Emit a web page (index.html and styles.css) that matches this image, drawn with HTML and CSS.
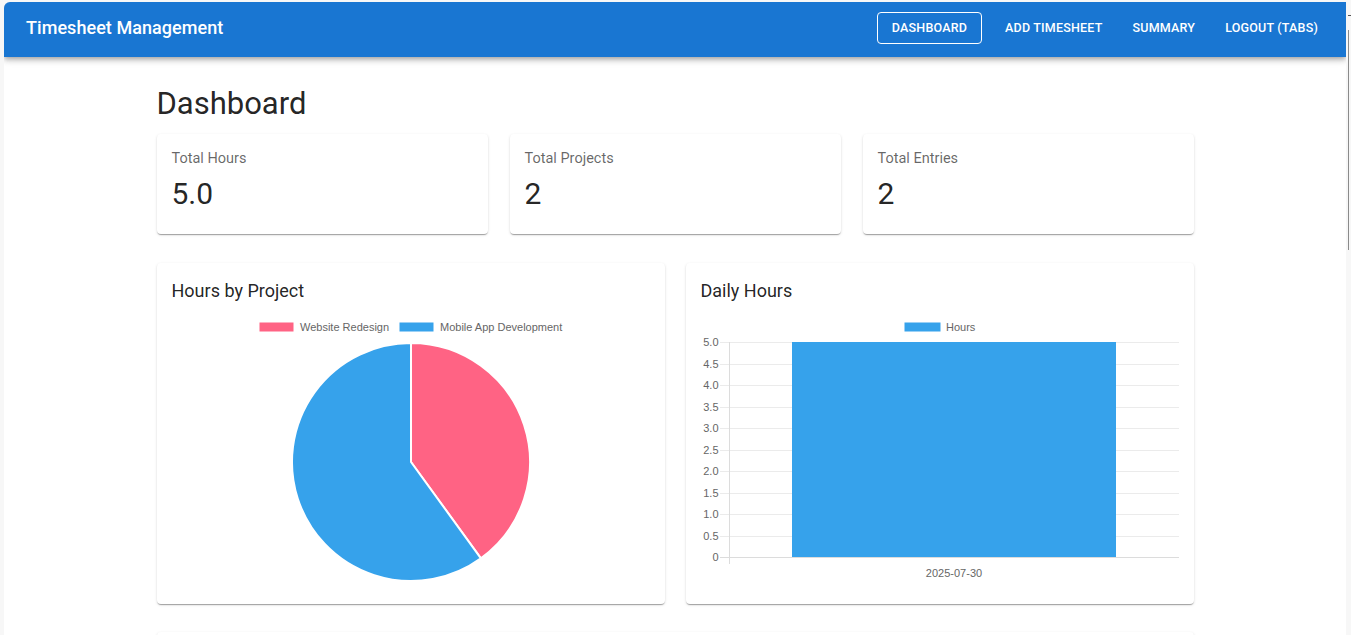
FILE: index.html
```html
<!DOCTYPE html>
<html lang="en">
<head>
<meta charset="utf-8">
<title>Timesheet Management</title>
<link rel="stylesheet" href="styles.css">
</head>
<body>
<div class="frame">
  <header class="appbar">
    <div class="brand">Timesheet Management</div>
    <nav class="nav">
      <a class="nav-btn active">Dashboard</a>
      <a class="nav-btn">Add Timesheet</a>
      <a class="nav-btn">Summary</a>
      <a class="nav-btn">Logout (Tabs)</a>
    </nav>
  </header>

  <main class="container">
    <h1 class="page-title">Dashboard</h1>

    <section class="stats">
      <div class="card stat">
        <div class="stat-label">Total Hours</div>
        <div class="stat-value">5.0</div>
      </div>
      <div class="card stat">
        <div class="stat-label">Total Projects</div>
        <div class="stat-value">2</div>
      </div>
      <div class="card stat">
        <div class="stat-label">Total Entries</div>
        <div class="stat-value">2</div>
      </div>
    </section>

    <section class="charts">
      <div class="card chart-card">
        <h2 class="chart-title">Hours by Project</h2>
        <svg class="chart" width="478" height="276" viewBox="0 0 478 276">
          <rect x="87.5" y="9.5" width="34" height="9" fill="#ff6384"/>
          <text class="legend" x="128" y="17.5">Website Redesign</text>
          <rect x="227.5" y="9.5" width="34" height="9" fill="#36a2eb"/>
          <text class="legend" x="268" y="17.5">Mobile App Development</text>
          <path d="M239,149 L239,30 A119,119 0 0 1 308.9,245.3 Z" fill="#ff6384" stroke="#fff" stroke-width="2" stroke-linejoin="round"/>
          <path d="M239,149 L308.9,245.3 A119,119 0 1 1 239,30 Z" fill="#36a2eb" stroke="#fff" stroke-width="2" stroke-linejoin="round"/>
        </svg>
      </div>

      <div class="card chart-card">
        <h2 class="chart-title">Daily Hours</h2>
        <svg class="chart" width="478" height="276" viewBox="0 0 478 276">
          <rect x="203.5" y="9.5" width="36" height="9" fill="#36a2eb"/>
          <text class="legend" x="245" y="17.5">Hours</text>
          <g class="grid">
            <line x1="19" y1="29.5" x2="478" y2="29.5"/>
            <line x1="19" y1="51.5" x2="478" y2="51.5"/>
            <line x1="19" y1="72.5" x2="478" y2="72.5"/>
            <line x1="19" y1="94.5" x2="478" y2="94.5"/>
            <line x1="19" y1="115.5" x2="478" y2="115.5"/>
            <line x1="19" y1="137.5" x2="478" y2="137.5"/>
            <line x1="19" y1="158.5" x2="478" y2="158.5"/>
            <line x1="19" y1="180.5" x2="478" y2="180.5"/>
            <line x1="19" y1="201.5" x2="478" y2="201.5"/>
            <line x1="19" y1="223.5" x2="478" y2="223.5"/>
          </g>
          <line class="axis" x1="19" y1="244.5" x2="478" y2="244.5"/>
          <line class="axis" x1="28.5" y1="29" x2="28.5" y2="251"/>
          <g class="ticks">
            <text x="17.5" y="29">5.0</text>
            <text x="17.5" y="50.5">4.5</text>
            <text x="17.5" y="72">4.0</text>
            <text x="17.5" y="93.5">3.5</text>
            <text x="17.5" y="115">3.0</text>
            <text x="17.5" y="136.5">2.5</text>
            <text x="17.5" y="158">2.0</text>
            <text x="17.5" y="179.5">1.5</text>
            <text x="17.5" y="201">1.0</text>
            <text x="17.5" y="222.5">0.5</text>
            <text x="17.5" y="244">0</text>
          </g>
          <rect x="91" y="29" width="324" height="215" fill="#36a2eb"/>
          <text class="xlabel" x="253" y="264">2025-07-30</text>
        </svg>
      </div>
    </section>

    <div class="card next-card"></div>
  </main>
</div>
<div class="scroll-line"></div>
<div class="scroll-tick"></div>
</body>
</html>
```

FILE: styles.css
```css
html, body {
  margin: 0;
  padding: 0;
}

body {
  background: #f7f7f7;
  font-family: Roboto, "Noto Sans", Arial, sans-serif;
  color: rgba(0, 0, 0, 0.87);
  height: 635px;
  overflow: hidden;
  position: relative;
}

.frame {
  margin: 2px 0 0 4px;
  width: 1342px;
  height: 633px;
  background: #ffffff;
  border-top-left-radius: 6px;
  overflow: hidden;
}

.appbar {
  height: 55px;
  box-sizing: border-box;
  background: #1976d2;
  color: #ffffff;
  display: flex;
  align-items: center;
  padding: 0 13px 4px 22px;
  position: relative;
  z-index: 2;
  box-shadow: 0 2px 4px -1px rgba(0, 0, 0, 0.2),
              0 4px 5px 0 rgba(0, 0, 0, 0.14),
              0 1px 10px 0 rgba(0, 0, 0, 0.12);
}

.brand {
  flex: 1;
  font-size: 18px;
  font-weight: 500;
  letter-spacing: 0.05px;
}

.nav {
  display: flex;
  align-items: center;
}

.nav-btn {
  display: block;
  font-size: 12.5px;
  font-weight: 500;
  line-height: 20px;
  letter-spacing: 0.2px;
  text-transform: uppercase;
  padding: 5px 14px;
  border: 1px solid transparent;
  border-radius: 4px;
  cursor: pointer;
}

.nav-btn.active {
  border-color: #ffffff;
  margin-right: 8px;
}

.container {
  width: 1037px;
  margin: 0 auto;
  padding-top: 27px;
}

.page-title {
  margin: 0 0 10px 0;
  font-size: 31px;
  line-height: 40px;
  font-weight: 400;
  color: rgba(0, 0, 0, 0.87);
}

.card {
  background: #ffffff;
  border-radius: 4px;
  box-shadow: 0 2px 1px -1px rgba(0, 0, 0, 0.2),
              0 1px 1px 0 rgba(0, 0, 0, 0.14),
              0 1px 3px 0 rgba(0, 0, 0, 0.12);
}

.stats {
  display: grid;
  grid-template-columns: repeat(3, 1fr);
  gap: 22px;
}

.stat {
  height: 100px;
  box-sizing: border-box;
  padding: 15px;
}

.stat-label {
  font-size: 14.5px;
  line-height: 19px;
  color: rgba(0, 0, 0, 0.6);
}

.stat-value {
  margin-top: 8px;
  font-size: 30px;
  line-height: 36px;
  font-weight: 400;
}

.charts {
  display: grid;
  grid-template-columns: 1fr 1fr;
  gap: 21px;
  margin-top: 29px;
}

.chart-card {
  height: 341px;
  box-sizing: border-box;
  padding: 16px 15px 15px;
}

.chart-title {
  margin: 0;
  font-size: 18px;
  line-height: 24px;
  font-weight: 400;
}

.chart {
  display: block;
  margin-top: 10px;
}

.chart text {
  font-family: "Liberation Sans", Arial, sans-serif;
  font-size: 11px;
  fill: #666666;
}

.chart .ticks text {
  text-anchor: end;
  dominant-baseline: central;
}

.chart .xlabel {
  text-anchor: middle;
}

.grid line {
  stroke: #ebebeb;
  stroke-width: 1;
}

.axis {
  stroke: #dcdcdc;
  stroke-width: 1;
}

.next-card {
  margin-top: 28px;
  height: 200px;
}

.scroll-line {
  position: absolute;
  left: 1348px;
  top: 30px;
  width: 1px;
  height: 220px;
  background: #8a8a8a;
}

.scroll-tick {
  position: absolute;
  left: 1348px;
  top: 15px;
  width: 3px;
  height: 1px;
  background: #555555;
}
```
